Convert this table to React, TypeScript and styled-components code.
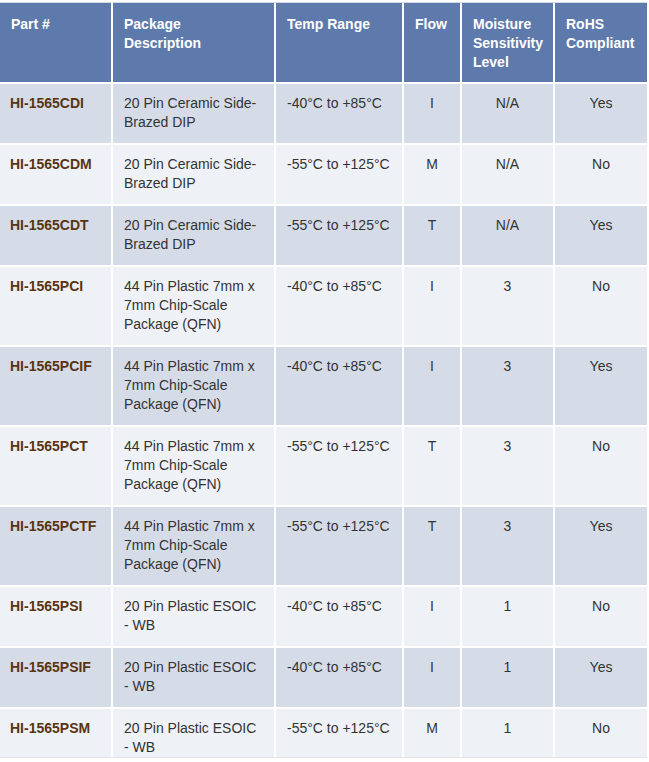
import React from "react";
import styled, { createGlobalStyle } from "styled-components";

const Global = createGlobalStyle`
  html, body { margin: 0; padding: 0; background: #ffffff; }
  body { font-family: "Liberation Sans", Arial, sans-serif; }
`;

const Wrapper = styled.div`
  width: 647px;
  padding-top: 2px;
`;

const Grid = styled.div`
  display: grid;
  grid-template-columns: 111px 161px 126px 56px 91px 92px;
  column-gap: 2px;
  row-gap: 2px;
  background: #ffffff;
  border-top: 1px solid #d3dae6;
  border-bottom: 1px solid #e2e4e8;
`;

const HeadCell = styled.div<{ $desc?: boolean }>`
  background: #5e79ab;
  color: #ffffff;
  font-weight: bold;
  font-size: 14px;
  line-height: 19px;
  padding: 12px ${(p) => (p.$desc ? "14px" : "6px")} 10px 11px;
  height: 79px;
  box-sizing: border-box;
  text-align: left;
`;

const Cell = styled.div<{ $alt: boolean; $center?: boolean; $part?: boolean; $last?: boolean; $desc?: boolean }>`
  background: ${(p) => (p.$alt ? "#eef1f6" : "#d5dce8")};
  color: ${(p) => (p.$part ? "#5a3410" : "#333333")};
  font-weight: ${(p) => (p.$part ? "bold" : "normal")};
  font-size: 14px;
  line-height: 19px;
  padding-top: 10px;
  padding-bottom: ${(p) => (p.$last ? "0" : "11px")};
  padding-left: ${(p) => (p.$part ? "10px" : p.$center ? "6px" : "11px")};
  padding-right: ${(p) => (p.$desc ? "13px" : "6px")};
  text-align: ${(p) => (p.$center ? "center" : "left")};
  box-sizing: border-box;
`;

type Row = [string, string, string, string, string, string];

const rows: Row[] = [
  ["HI-1565CDI", "20 Pin Ceramic Side-Brazed DIP", "-40°C to +85°C", "I", "N/A", "Yes"],
  ["HI-1565CDM", "20 Pin Ceramic Side-Brazed DIP", "-55°C to +125°C", "M", "N/A", "No"],
  ["HI-1565CDT", "20 Pin Ceramic Side-Brazed DIP", "-55°C to +125°C", "T", "N/A", "Yes"],
  ["HI-1565PCI", "44 Pin Plastic 7mm x 7mm Chip-Scale Package (QFN)", "-40°C to +85°C", "I", "3", "No"],
  ["HI-1565PCIF", "44 Pin Plastic 7mm x 7mm Chip-Scale Package (QFN)", "-40°C to +85°C", "I", "3", "Yes"],
  ["HI-1565PCT", "44 Pin Plastic 7mm x 7mm Chip-Scale Package (QFN)", "-55°C to +125°C", "T", "3", "No"],
  ["HI-1565PCTF", "44 Pin Plastic 7mm x 7mm Chip-Scale Package (QFN)", "-55°C to +125°C", "T", "3", "Yes"],
  ["HI-1565PSI", "20 Pin Plastic ESOIC - WB", "-40°C to +85°C", "I", "1", "No"],
  ["HI-1565PSIF", "20 Pin Plastic ESOIC - WB", "-40°C to +85°C", "I", "1", "Yes"],
  ["HI-1565PSM", "20 Pin Plastic ESOIC - WB", "-55°C to +125°C", "M", "1", "No"],
];

const headers = ["Part #", "Package Description", "Temp Range", "Flow", "Moisture Sensitivity Level", "RoHS Compliant"];

export default function App() {
  return (
    <Wrapper>
      <Global />
      <Grid>
        {headers.map((h, i) => (
          <HeadCell key={h} $desc={i === 1}>{h}</HeadCell>
        ))}
        {rows.map((r, i) => {
          const alt = i % 2 === 1;
          const last = i === rows.length - 1;
          return (
            <React.Fragment key={r[0]}>
              <Cell $alt={alt} $last={last} $part>{r[0]}</Cell>
              <Cell $alt={alt} $last={last} $desc>{r[1]}</Cell>
              <Cell $alt={alt} $last={last}>{r[2]}</Cell>
              <Cell $alt={alt} $last={last} $center>{r[3]}</Cell>
              <Cell $alt={alt} $last={last} $center>{r[4]}</Cell>
              <Cell $alt={alt} $last={last} $center>{r[5]}</Cell>
            </React.Fragment>
          );
        })}
      </Grid>
    </Wrapper>
  );
}
